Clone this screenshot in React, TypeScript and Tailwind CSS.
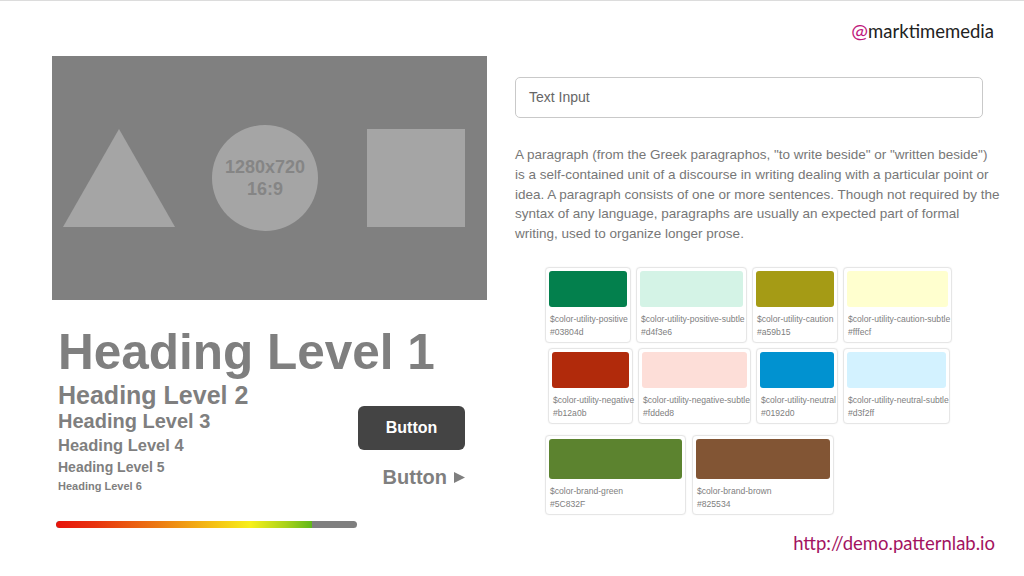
import React from "react";

const SWATCH_ROWS = [
  {
    offset: "ml-[30px]",
    items: [
      { name: "$color-utility-positive", hex: "#03804d", w: "w-[86px]" },
      { name: "$color-utility-positive-subtle", hex: "#d4f3e6", w: "w-[111px]" },
      { name: "$color-utility-caution", hex: "#a59b15", w: "w-[86px]" },
      { name: "$color-utility-caution-subtle", hex: "#ffffcf", label: "#fffecf", w: "w-[109px]" },
    ],
  },
  {
    offset: "ml-[33px]",
    items: [
      { name: "$color-utility-negative", hex: "#b12a0b", w: "w-[85px]" },
      { name: "$color-utility-negative-subtle", hex: "#fdded8", w: "w-[113px]" },
      { name: "$color-utility-neutral", hex: "#0192d0", w: "w-[82px]" },
      { name: "$color-utility-neutral-subtle", hex: "#d3f2ff", w: "w-[107px]" },
    ],
  },
];

const BRAND = [
  { name: "$color-brand-green", hex: "#5C832F", w: "w-[141px]" },
  { name: "$color-brand-brown", hex: "#825534", w: "w-[142px]" },
];

const PARAGRAPH = [
  'A paragraph (from the Greek paragraphos, "to write beside" or "written beside")',
  "is a self-contained unit of a discourse in writing dealing with a particular point or",
  "idea. A paragraph consists of one or more sentences. Though not required by the",
  "syntax of any language, paragraphs are usually an expected part of formal",
  "writing, used to organize longer prose.",
];

function Swatch({ name, hex, label, w, h }: { name: string; hex: string; label?: string; w: string; h: string }) {
  return (
    <div className={`${w} rounded-[4px] border border-[#e6e6e6] bg-white p-[3px] shadow-[0_0_2px_rgba(0,0,0,0.05)]`}>
      <div className={`${h} rounded-[3px]`} style={{ backgroundColor: hex }} />
      <div className="mt-[6px] pl-[1px] text-[8.6px] leading-[13px] text-[#808080] whitespace-nowrap">
        <div>{name}</div>
        <div>{label ?? hex}</div>
      </div>
    </div>
  );
}

export default function App() {
  return (
    <div className="relative h-[576px] w-[1024px] overflow-hidden border-t border-[#dcdcdc] bg-white font-['Liberation_Sans',Arial,sans-serif]">
      {/* handle */}
      <div className="flex h-[55px] justify-end pr-[30px] pt-[14px]">
        <span className="font-['Lato',sans-serif] text-[18.5px] text-[#222]">
          <span className="text-[#c0177c] text-[20px]">@</span>marktimemedia
        </span>
      </div>

      <div className="flex pl-[52px]">
        {/* left column */}
        <div className="w-[435px] flex flex-col">
          <div className="flex h-[244px] items-center bg-[#808080] pl-[11px]">
            <svg width="112" height="98" viewBox="0 0 112 98">
              <polygon points="56,0 112,98 0,98" fill="#a5a5a5" />
            </svg>
            <div className="ml-[37px] flex h-[106px] w-[106px] flex-col items-center justify-center rounded-full bg-[#a5a5a5] text-[18px] font-bold leading-[22px] text-[#858585]">
              <span>1280x720</span>
              <span>16:9</span>
            </div>
            <div className="ml-[49px] h-[98px] w-[98px] bg-[#a5a5a5]" />
          </div>

          <div className="pl-[6px] pr-[22px] font-bold text-[#7f7f7f] whitespace-nowrap">
            <h1 className="mt-[26px] text-[49.5px] leading-[52px]">Heading Level 1</h1>
            <div className="mt-[3px] flex items-start justify-between">
              <div className="flex flex-col">
                <h2 className="text-[25px] leading-[28px]">Heading Level 2</h2>
                <h3 className="text-[20px] leading-[24px]">Heading Level 3</h3>
                <h4 className="text-[16.5px] leading-[24px]">Heading Level 4</h4>
                <h5 className="text-[14px] leading-[20px]">Heading Level 5</h5>
                <h6 className="text-[11px] leading-[18px]">Heading Level 6</h6>
              </div>
              <div className="mt-[25px] flex flex-col items-end">
                <button className="h-[44px] w-[107px] rounded-[6px] bg-[#444] text-[16px] font-bold text-white">
                  Button
                </button>
                <div className="mt-[15px] flex items-center gap-[7px] text-[20px] leading-[24px] text-[#7f7f7f]">
                  <span>Button</span>
                  <svg width="11" height="11" viewBox="0 0 11 11">
                    <polygon points="0,0 11,5.5 0,11" fill="#7f7f7f" />
                  </svg>
                </div>
              </div>
            </div>
          </div>

          <div className="ml-[4px] mt-[26px] h-[7px] w-[301px] overflow-hidden rounded-full bg-[#7f7f7f]">
            <div className="h-full w-[256px] rounded-l-full bg-[linear-gradient(90deg,#e8140c_0%,#e8320e_15%,#ec7a12_40%,#f5c214_62%,#f7f01a_76%,#a8d21a_90%,#5fb81a_100%)]" />
          </div>
        </div>

        {/* right column */}
        <div className="ml-[28px] flex w-[468px] flex-col pt-[21px]">
          <div className="flex h-[41px] items-center rounded-[5px] border border-[#c9c9c9] pl-[13px] text-[14px] text-[#666]">
            Text Input
          </div>

          <p className="mt-[27px] whitespace-nowrap text-[13.5px] leading-[19.8px] text-[#777]">
            {PARAGRAPH.map((line) => (
              <span key={line} className="block">{line}</span>
            ))}
          </p>

          <div className="mt-[23px] flex flex-col gap-[5px]">
            {SWATCH_ROWS.map((row, i) => (
              <div key={i} className={`flex gap-[5px] ${row.offset}`}>
                {row.items.map((s) => (
                  <Swatch key={s.name} {...s} h="h-[36px]" />
                ))}
              </div>
            ))}
            <div className="mt-[6px] ml-[30px] flex gap-[6px]">
              {BRAND.map((s) => (
                <Swatch key={s.name} {...s} h="h-[40px]" />
              ))}
            </div>
          </div>

          <div className="-mr-[12px] mt-[15px] text-right font-['Lato',sans-serif] text-[18.5px] text-[#a3135f]">
            http://demo.patternlab.io
          </div>
        </div>
      </div>
    </div>
  );
}
